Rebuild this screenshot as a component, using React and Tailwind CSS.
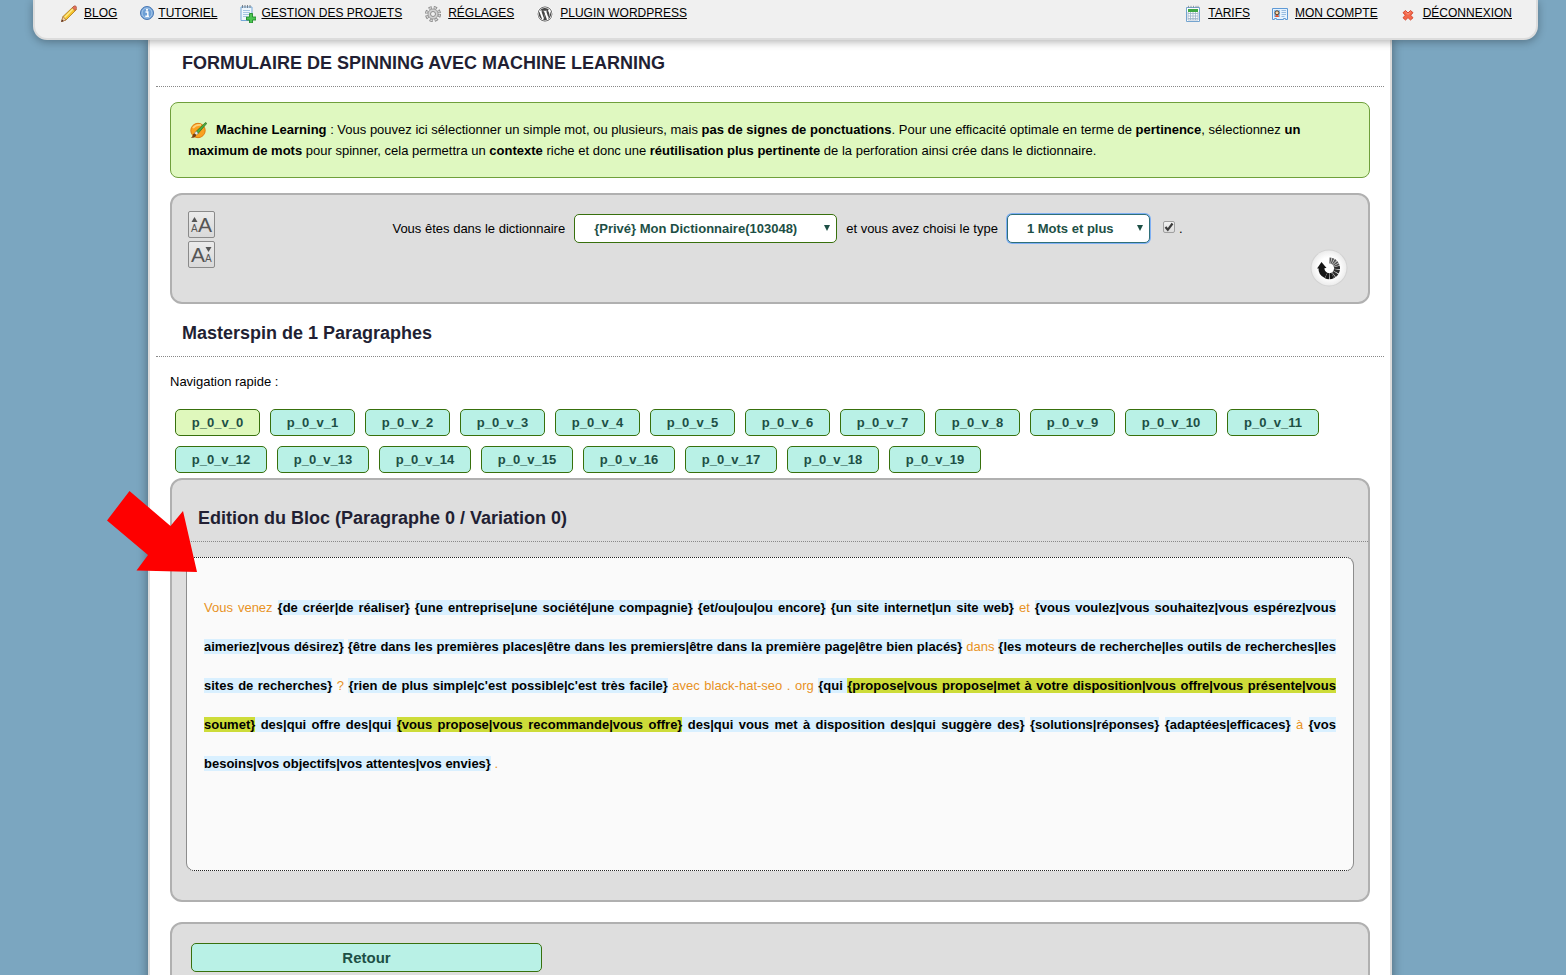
import React, { useState } from "react";

const PencilIcon = () => (
  <svg width="16" height="18" viewBox="0 0 16 18" aria-hidden="true">
    <path d="M.5 16.5 2 11.5 12.500 1.500l3 3L5 15z" fill="#f4c22b" stroke="#a9761c" strokeWidth=".8" />
    <path d="M3.500 12.500 12.500 3.500" stroke="#fdeb8c" strokeWidth="1.500" />
    <path d="M11.200 2.800 13 1q1-.6 2 .3t.6 2.200L14 5.500z" fill="#e0705a" stroke="#a05040" strokeWidth=".6" />
    <path d="m.5 16.500 1.500-5L5 15z" fill="#eed0a0" stroke="#a06a4a" strokeWidth=".6" />
    <path d="m.3 16.900.7-2.400 1.600 1.600z" fill="#4a2424" />
  </svg>
);

const InfoIcon = () => (
  <svg width="14" height="16" viewBox="0 0 14 16" aria-hidden="true">
    <circle cx="7" cy="8" r="6.500" fill="#6d9fd6" stroke="#4a78b4" />
    <circle cx="7" cy="8" r="5" fill="none" stroke="#b9d3ee" strokeWidth=".8" />
    <circle cx="7" cy="4.800" r="1.100" fill="#fff" />
    <path d="M5.500 7h2.300v4M5.300 11.300h3.600" stroke="#fff" strokeWidth="1.400" fill="none" />
  </svg>
);

const NotepadIcon = () => (
  <svg width="16" height="18" viewBox="0 0 16 18" aria-hidden="true">
    <path d="M1 2h11v13.500H1z" fill="#eef6fd" stroke="#74a8d8" />
    <path d="M3 5.500h7M3 7.500h7M3 9.500h6M3 11.500h4" stroke="#9bbfe0" strokeWidth=".9" />
    <path d="M2.500 0v3M5 0v3M7.500 0v3M10 0v3" stroke="#6d7680" strokeWidth=".9" />
    <path d="M9.500 8.500h3V12H16v3h-3.500v3h-3v-3H6.500v-3h3z" fill="#4cc552" stroke="#238a2b" strokeWidth=".9" />
  </svg>
);

const GearIcon = () => (
  <svg width="16" height="18" viewBox="0 0 16 18" aria-hidden="true">
    <circle cx="8" cy="9" r="6.500" fill="none" stroke="#858585" strokeWidth="3" strokeDasharray="3.100 2.006" />
    <circle cx="8" cy="9" r="6.400" fill="none" stroke="#d6d6d6" strokeWidth="1.500" strokeDasharray="2 3.026" strokeDashoffset="-.5" />
    <circle cx="8" cy="9" r="5" fill="#d2d2d2" stroke="#9a9a9a" strokeWidth=".9" />
    <circle cx="8" cy="9" r="2.500" fill="#f0f0f0" stroke="#8c8c8c" />
  </svg>
);

const WordpressIcon = () => (
  <svg width="16" height="18" viewBox="0 0 16 18" aria-hidden="true">
    <circle cx="8" cy="9" r="8" fill="#fff" />
    <g transform="translate(0 1)" fill="#464646">
      <path d="M8 .6a7.400 7.400 0 1 0 0 14.800A7.400 7.400 0 0 0 8 .6zm0 .6a6.800 6.800 0 1 1 0 13.600A6.800 6.800 0 0 1 8 1.200z" />
      <path d="M1.800 8c0 2.400 1.400 4.500 3.500 5.500L2.300 5.500C2 6.300 1.800 7.100 1.800 8zm10.400-.3c0-.8-.3-1.300-.5-1.700-.3-.5-.6-1-.6-1.400 0-.6.4-1.100 1-1.100A6.200 6.200 0 0 0 2.800 4.600h1.900l.4.1c.3 0 .3.500 0 .5l-.7.100 2.300 6.600 1.300-4-1-2.600-.6-.1c-.3 0-.3-.5 0-.5h3.500c.3 0 .3.500 0 .5l-.7.100 2.200 6.500.6-2c.3-.8.4-1.500.4-2.100zM8.100 8.500l-1.900 5.400a6.200 6.200 0 0 0 3.800-.1zm5.300-3.500c.2 1 .1 2-.4 3.300l-1.900 5A6.200 6.200 0 0 0 13.400 5z" />
    </g>
  </svg>
);

const CalendarIcon = () => (
  <svg width="16" height="18" viewBox="0 0 16 18" aria-hidden="true">
    <path d="M1.500 2.500h13v14h-13z" fill="#fdfeff" stroke="#74a4cf" />
    <path d="M3 4h10v3H3z" fill="#3fa845" />
    <path d="M3 8.500h10M3 11h10M3 13.500h10" stroke="#9cb3c8" strokeWidth=".8" />
    <path d="M3 7v8M5.500 7v8M8 7v8M10.500 7v8M13 7v8M3 15h10" stroke="#9cb3c8" strokeWidth=".8" />
    <path d="M3.500.8v2M6 .8v2M8.500.8v2M11 .8v2M13 .8v2" stroke="#7b8794" strokeWidth=".8" />
  </svg>
);

const CardIcon = () => (
  <svg width="16" height="18" viewBox="0 0 16 18" aria-hidden="true">
    <path d="M.5 3.500h15v11h-2v-1h-2v1h-7v-1h-2v1h-2z" fill="#e6f2fd" stroke="#5f9ad6" />
    <path d="M2 5h6v7H2z" fill="#8fc0ee" />
    <circle cx="5" cy="7.800" r="2" fill="#f8d5a8" stroke="#4a2d14" strokeWidth=".9" />
    <path d="M3 12q0-2 2-2t2 2z" fill="#e5532d" />
    <path d="M9.500 5.500h4.500M9.500 7.500h4.500M9.500 9.500h4.500M9.500 11.500h3" stroke="#8fb6dc" strokeWidth=".9" />
  </svg>
);

const CrossIcon = () => (
  <svg width="16" height="18" viewBox="0 0 16 18" aria-hidden="true">
    <path
      d="M5.500 5.500 8 8l2.500-2.500 2.500 2.200L10.700 10.200 13 12.800 10.500 15 8 12.600 5.500 15 3 12.800l2.300-2.600L3 7.700z"
      fill="#f4694c"
      stroke="#d33e25"
      strokeWidth=".9"
      strokeLinejoin="round"
    />
    <path d="m5.500 7 2.500 2.300L10.500 7" stroke="#fba28c" fill="none" strokeWidth=".9" />
  </svg>
);

const BrushIcon = () => (
  <svg className="ml-[2px] mr-[9px] inline-block align-[-5px]" width="17" height="17" viewBox="0 0 17 17" aria-hidden="true">
    <circle cx="8" cy="8.500" r="7.200" fill="#f9a11e" stroke="#e07b10" />
    <path d="M3 6q3-4 8-3" stroke="#fdd27a" strokeWidth="1.800" fill="none" />
    <path d="M6 9.500 15.500.5q1.500.3.800 1.500L8 11.500z" fill="#4bae3c" stroke="#2c6c22" strokeWidth=".7" />
    <path d="m4.500 11.200 1.700-1.900L8.200 11.300l-1.900 1.700z" fill="#e8eef2" stroke="#77838c" strokeWidth=".6" />
    <path d="M.8 15.800q1.700-1 1.900-2.600t1.900-1.800l1.600 1.500q-.4 3-5.400 2.900z" fill="#7a3d10" />
  </svg>
);

const ReloadIcon = () => (
  <svg width="38" height="38" viewBox="0 0 38 38" aria-hidden="true">
    <defs>
      <radialGradient id="knob">
        <stop offset=".6" stopColor="#fff" />
        <stop offset="1" stopColor="#ececec" />
      </radialGradient>
    </defs>
    <circle cx="19" cy="19" r="18.500" fill="#d2d2d2" />
    <circle cx="19" cy="19" r="17.500" fill="url(#knob)" />
    <g fill="none" strokeWidth="6">
      <path d="M19.500 11.500a7.800 7.800 0 0 1 7.300 6" stroke="#555" strokeDasharray="1.500 .5" />
      <path d="M26.800 17.500a7.800 7.800 0 0 1-4.300 9" stroke="#2c2c2c" strokeDasharray="2.600 .5" />
      <path d="M22.500 26.500a7.800 7.800 0 0 1-6.500-.1" stroke="#161616" strokeDasharray="3 .5" />
      <path d="M16 26.400a7.800 7.800 0 0 1-4.500-7.600" stroke="#161616" />
    </g>
    <path d="m7 19.500 4.500-6.500 5 6z" fill="#161616" />
  </svg>
);

const leftLinks = [
  { label: "BLOG", Icon: PencilIcon, gap: "gap-[7px]" },
  { label: "TUTORIEL", Icon: InfoIcon, gap: "gap-1" },
  { label: "GESTION DES PROJETS", Icon: NotepadIcon, gap: "gap-[5px]" },
  { label: "RÉGLAGES", Icon: GearIcon, gap: "gap-[7px]" },
  { label: "PLUGIN WORDPRESS", Icon: WordpressIcon, gap: "gap-[7px]" },
];

const rightLinks = [
  { label: "TARIFS", Icon: CalendarIcon, gap: "gap-[7px]" },
  { label: "MON COMPTE", Icon: CardIcon, gap: "gap-[7px]" },
  { label: "DÉCONNEXION", Icon: CrossIcon, gap: "gap-[7px]" },
];

const NavLinks = ({ links, className }) => (
  <ul className={`flex ${className}`}>
    {links.map(({ label, Icon, gap }) => (
      <li key={label}>
        <a href="#" className={`flex items-start text-xs leading-5 text-black ${gap}`}>
          <span className="pt-[2px]">
            <Icon />
          </span>
          <span className="underline">{label}</span>
        </a>
      </li>
    ))}
  </ul>
);

const Heading = ({ as: Tag = "h2", className = "", children }) => (
  <Tag
    className={`border-b border-dotted border-[#888888] pt-[11px] pb-[11px] pl-[26px] text-lg leading-6 font-bold text-[#221f33] ${className}`}
  >
    {children}
  </Tag>
);

const Panel = ({ className = "", children }) => (
  <section className={`rounded-xl border-2 border-[#b0b0b0] bg-[#dedede] ${className}`}>
    {children}
  </section>
);

const Select = ({ id, className, value, onChange, options }) => (
  <span className="relative inline-flex">
    <select
      id={id}
      value={value}
      onChange={(e) => onChange(e.target.value)}
      className={`h-[29px] appearance-none rounded-[5px] border bg-white pl-[19px] text-[13px] font-bold text-[#1d4f45] outline-none ${className}`}
    >
      {options.map((option) => (
        <option key={option}>{option}</option>
      ))}
    </select>
    <svg
      className="pointer-events-none absolute top-[11px] right-[7px]"
      width="6"
      height="6"
      viewBox="0 0 6 6"
      aria-hidden="true"
    >
      <path d="M0 0h6L3 6z" fill="#1d4f45" />
    </svg>
  </span>
);

const FontButton = ({ label, grow, onClick }) => (
  <button
    type="button"
    aria-label={label}
    onClick={onClick}
    className="size-[27px] rounded-[2px] border border-[#8a8a8a] bg-linear-to-b from-[#ebebeb] to-[#d9d9d9]"
  >
    <svg width="25" height="25" viewBox="0 0 25 25" fill="#555" aria-hidden="true">
      {grow ? (
        <>
          <path d="m5.500 5 3 5h-6z" />
          <text x="2" y="20" fontSize="10">A</text>
          <text x="9" y="20" fontSize="21">A</text>
        </>
      ) : (
        <>
          <path d="m19.500 10-3-5h6z" />
          <text x="2" y="20" fontSize="21">A</text>
          <text x="16" y="20" fontSize="10">A</text>
        </>
      )}
    </svg>
  </button>
);

const Spin = ({ children }) => (
  <b className="bg-[#d9f0ff] text-black">{children}</b>
);

const Nested = ({ children }) => (
  <span className="bg-[#cddc39]">{children}</span>
);

const variations = Array.from({ length: 20 }, (_, i) => i);

const App = () => {
  const [dictionary, setDictionary] = useState("{Privé} Mon Dictionnaire(103048)");
  const [type, setType] = useState("1 Mots et plus");
  const [checked, setChecked] = useState(true);
  const [current, setCurrent] = useState(0);

  return (
    <div className="min-h-screen bg-[#7ba6c0] font-['Liberation_Sans',Arial,sans-serif] text-[13px] leading-[21px] text-black">
      <header className="relative z-10 mr-[28px] ml-[33px] flex justify-between rounded-b-[14px] border-2 border-t-0 border-[#dcdcdc] bg-[#f0f0f0] pt-[3px] pr-6 pb-[15px] pl-[26px] shadow-[0_2px_8px_rgba(0,0,0,0.3)]">
        <nav aria-label="Principal">
          <NavLinks links={leftLinks} className="gap-[23px]" />
        </nav>
        <nav aria-label="Compte">
          <NavLinks links={rightLinks} className="gap-[22px]" />
        </nav>
      </header>

      <div className="pr-[26px]">
        <main className="mx-auto max-w-[1244px] border-x-2 border-[#dcdcdc] bg-white px-[6px] shadow-[0_0_10px_rgba(0,0,0,0.4)]">
          <Heading as="h1">FORMULAIRE DE SPINNING AVEC MACHINE LEARNING</Heading>

          <div className="px-[14px]">
            <p className="mt-[15px] rounded-lg border border-[#6f9f3c] bg-[#dff8c0] px-[17px] py-4">
              <BrushIcon />
              <b>Machine Learning</b> : Vous pouvez ici sélectionner un simple mot, ou plusieurs, mais{" "}
              <b>pas de signes de ponctuations</b>. Pour une efficacité optimale en terme de{" "}
              <b>pertinence</b>, sélectionnez <b>un maximum de mots</b> pour spinner, cela permettra un{" "}
              <b>contexte</b> riche et donc une <b>réutilisation plus pertinente</b> de la perforation
              ainsi crée dans le dictionnaire.
            </p>

            <Panel className="mt-[15px] flex gap-2 px-4 pt-4 pb-[15px]">
              <div className="flex flex-col gap-[3px]">
                <FontButton label="Agrandir le texte" grow />
                <FontButton label="Réduire le texte" />
              </div>
              <div className="flex flex-1 flex-col pt-[3px]">
                <div className="flex items-center justify-center gap-[9px]">
                  <label htmlFor="dictionary">Vous êtes dans le dictionnaire</label>
                  <Select
                    id="dictionary"
                    className="w-[263px] border-[#38700d]"
                    value={dictionary}
                    onChange={setDictionary}
                    options={["{Privé} Mon Dictionnaire(103048)"]}
                  />
                  <label htmlFor="type">et vous avez choisi le type</label>
                  <Select
                    id="type"
                    className="w-[143px] border-[#2f6f78] ring-1 ring-[#7fb0f5]"
                    value={type}
                    onChange={setType}
                    options={["1 Mots et plus"]}
                  />
                  <label className="ml-1 flex items-center gap-1">
                    <span className="relative mb-1 flex">
                      <input
                        type="checkbox"
                        aria-label="Activer le type"
                        checked={checked}
                        onChange={(e) => setChecked(e.target.checked)}
                        className="size-3 appearance-none rounded-[2px] border border-[#a0a0a0] bg-linear-to-b from-[#f2f2f2] to-[#dcdcdc]"
                      />
                      {checked && (
                        <svg
                          className="pointer-events-none absolute inset-0"
                          width="12"
                          height="12"
                          viewBox="0 0 12 12"
                          aria-hidden="true"
                        >
                          <path d="m2.500 6 2.300 2.800L9.500 2.500" fill="none" stroke="#3c3c3c" strokeWidth="2.200" />
                        </svg>
                      )}
                    </span>
                    .
                  </label>
                </div>
                <button type="button" aria-label="Recharger" className="mt-[6px] mr-1 self-end">
                  <ReloadIcon />
                </button>
              </div>
            </Panel>
          </div>

          <Heading className="mt-[6px]">Masterspin de 1 Paragraphes</Heading>

          <div className="px-[14px] pb-5">
            <p className="mt-[14px]">Navigation rapide :</p>
            <div className="mt-[17px] flex flex-wrap gap-[10px] px-[5px]">
              {variations.map((i) => (
                <button
                  key={i}
                  type="button"
                  onClick={() => setCurrent(i)}
                  className={`h-[27px] rounded-[5px] border border-[#38700d] text-[13px] font-bold text-[#1d4f45] ${
                    i < 10 ? "w-[85px]" : "w-[92px]"
                  } ${i === current ? "bg-[#dff8bc]" : "bg-[#b9f1e6]"}`}
                >
                  p_0_v_{i}
                </button>
              ))}
            </div>

            <Panel className="relative mt-[5px] pb-[29px]">
              <Heading className="mt-[15px]">Edition du Bloc (Paragraphe 0 / Variation {current})</Heading>
              <div className="mx-[14px] mt-[15px] min-h-[314px] rounded-lg border border-dotted border-x-[#8c8c8c] border-y-[#222222] bg-[#fafafa] px-[17px] py-[30px] text-justify leading-[39px] text-[#e8921f] [border-left-style:solid] [border-right-style:solid]">
                Vous venez <Spin>{"{de créer|de réaliser}"}</Spin>{" "}
                <Spin>{"{une entreprise|une société|une compagnie}"}</Spin>{" "}
                <Spin>{"{et/ou|ou|ou encore}"}</Spin>{" "}
                <Spin>{"{un site internet|un site web}"}</Spin> et{" "}
                <Spin>{"{vous voulez|vous souhaitez|vous espérez|vous aimeriez|vous désirez}"}</Spin>{" "}
                <Spin>
                  {"{être dans les premières places|être dans les premiers|être dans la première page|être bien placés}"}
                </Spin>{" "}
                dans{" "}
                <Spin>{"{les moteurs de recherche|les outils de recherches|les sites de recherches}"}</Spin>{" "}
                ? <Spin>{"{rien de plus simple|c'est possible|c'est très facile}"}</Spin> avec
                black-hat-seo . org{" "}
                <Spin>
                  {"{qui "}
                  <Nested>{"{propose|vous propose|met à votre disposition|vous offre|vous présente|vous soumet}"}</Nested>
                  {" des|qui offre des|qui "}
                  <Nested>{"{vous propose|vous recommande|vous offre}"}</Nested>
                  {" des|qui vous met à disposition des|qui suggère des}"}
                </Spin>{" "}
                <Spin>{"{solutions|réponses}"}</Spin> <Spin>{"{adaptées|efficaces}"}</Spin> à{" "}
                <Spin>{"{vos besoins|vos objectifs|vos attentes|vos envies}"}</Spin> .
              </div>
              <svg
                className="pointer-events-none absolute top-[11px] -left-[65px]"
                width="90"
                height="81"
                viewBox="0 0 90 81"
                aria-hidden="true"
              >
                <path d="M22.500 0 0 29.500 41 64 29.500 79.500 90 81 76 20 63.500 35z" fill="#fe0000" />
              </svg>
            </Panel>

            <Panel className="mt-5 p-[19px]">
              <button
                type="button"
                className="h-[29px] w-[351px] rounded-[5px] border border-[#38700d] bg-[#b9f1e6] text-[15px] font-bold text-[#1d4f45]"
              >
                Retour
              </button>
            </Panel>
          </div>
        </main>
      </div>
    </div>
  );
};

export default App;
